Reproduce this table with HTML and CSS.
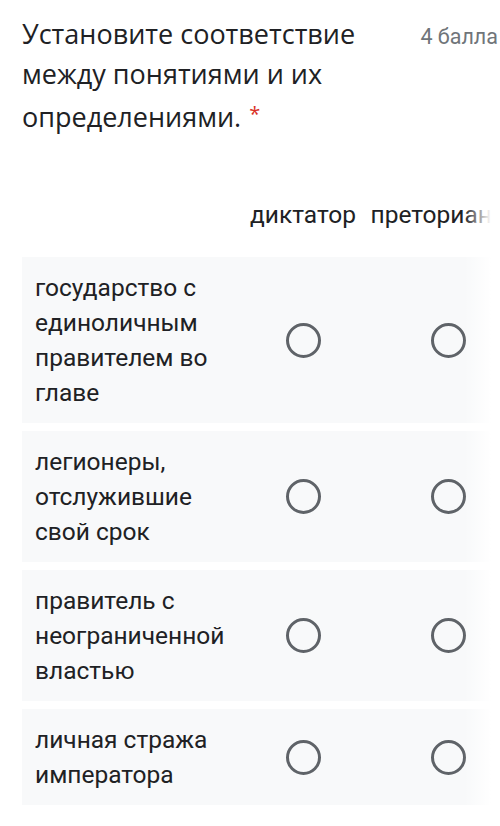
FILE: index.html
```html
<!DOCTYPE html>
<html lang="ru">
<head>
<meta charset="utf-8">
<title>Вопрос</title>
<link rel="stylesheet" href="styles.css">
</head>
<body>
<div class="question">
  <div class="q-head">
    <div class="q-title">Установите соответствие между понятиями и их определениями.<span class="req">*</span></div>
    <div class="q-points">4 балла</div>
  </div>
  <div class="grid-scroll">
    <div class="grid">
      <div class="grid-row header">
        <div class="label"></div>
        <div class="col-head">диктатор</div>
        <div class="col-head">преторианцы</div>
      </div>
      <div class="grid-row item">
        <div class="label">государство с единоличным правителем во главе</div>
        <div class="cell"><span class="radio"></span></div>
        <div class="cell"><span class="radio"></span></div>
      </div>
      <div class="grid-row item">
        <div class="label">легионеры, отслужившие свой срок</div>
        <div class="cell"><span class="radio"></span></div>
        <div class="cell"><span class="radio"></span></div>
      </div>
      <div class="grid-row item">
        <div class="label">правитель с неограниченной властью</div>
        <div class="cell"><span class="radio"></span></div>
        <div class="cell"><span class="radio"></span></div>
      </div>
      <div class="grid-row item">
        <div class="label">личная стража императора</div>
        <div class="cell"><span class="radio"></span></div>
        <div class="cell"><span class="radio"></span></div>
      </div>
    </div>
    <div class="fade"></div>
  </div>
</div>
</body>
</html>
```

FILE: styles.css
```css
html, body {
  margin: 0;
  padding: 0;
  background: #ffffff;
  overflow: hidden;
}

.question {
  padding-top: 14px;
  font-family: Roboto, "Noto Sans", Arial, sans-serif;
  color: #202124;
}

.q-head {
  display: flex;
  align-items: flex-start;
  padding-left: 22px;
}

.q-title {
  flex: 0 0 385px;
  font-family: "Open Sans", "Noto Sans", sans-serif;
  font-size: 27px;
  line-height: 40px;
  color: #202124;
}

.req {
  color: #d93025;
  font-size: 20px;
  margin-left: 8px;
  vertical-align: 6px;
}

.q-points {
  margin-left: auto;
  padding-right: 2px;
  padding-top: 11px;
  font-size: 21.5px;
  line-height: 24px;
  color: #70757a;
  white-space: nowrap;
}

.grid-scroll {
  position: relative;
  margin-left: 22px;
  margin-top: 60px;
  overflow: hidden;
}

.grid {
  display: flex;
  flex-direction: column;
  gap: 8px;
  width: 511px;
}

.grid-row {
  display: grid;
  grid-template-columns: 221px 120px 170px;
  align-items: center;
}

.grid-row.header {
  margin-bottom: 17px;
}

.col-head {
  text-align: center;
  font-size: 24.5px;
  line-height: 35px;
  white-space: nowrap;
  color: #202124;
}

.grid-row.item {
  background: #f8f9fa;
  padding: 13px 0;
}

.label {
  padding-left: 13px;
  padding-right: 3px;
  font-size: 24.5px;
  line-height: 35px;
  color: #202124;
}

.cell {
  display: flex;
  justify-content: center;
  align-items: center;
}

.radio {
  display: block;
  box-sizing: border-box;
  width: 35px;
  height: 35px;
  border: 3.5px solid #5f6368;
  border-radius: 50%;
}

.fade {
  position: absolute;
  top: 0;
  bottom: 0;
  right: 0;
  width: 36px;
  background: linear-gradient(to right, rgba(255,255,255,0) 0%, #ffffff 75%);
}
```
